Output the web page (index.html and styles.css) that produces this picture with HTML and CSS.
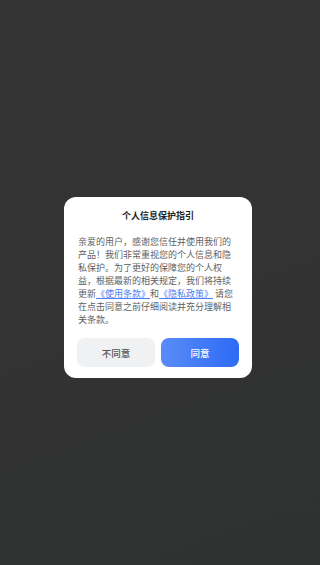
FILE: index.html
```html
<!DOCTYPE html>
<html lang="zh-CN">
<head>
  <meta charset="UTF-8">
  <meta name="viewport" content="width=device-width, initial-scale=1.0">
  <title>个人信息保护指引</title>
  <link rel="stylesheet" href="styles.css">
</head>
<body>
  <!-- Privacy Dialog -->
  <div class="overlay">
    <div class="dialog">
      <h2 class="dialog-title">个人信息保护指引</h2>
      <p class="dialog-text">亲爱的用户，感谢您信任并使用我们的产品！我们非常重视您的个人信息和隐私保护。为了更好的保障您的个人权益，根据最新的相关规定，我们将持续更新<a href="#">《使用条款》</a>和<a href="#">《隐私政策》</a> 请您在点击同意之前仔细阅读并充分理解相关条款。</p>
      <div class="dialog-buttons">
        <button class="btn btn-cancel">不同意</button>
        <button class="btn btn-ok">同意</button>
      </div>
    </div>
  </div>
</body>
</html>
```

FILE: styles.css
```css
/* General Styles */
html, body {
  margin: 0;
  padding: 0;
  height: 100%;
}

body {
  font-family: "Noto Sans CJK SC", "Noto Sans", sans-serif;
  background: linear-gradient(160deg, #353434 0%, #323332 50%, #2f3231 100%);
}

/* Overlay */
.overlay {
  height: 100%;
  display: flex;
  justify-content: center;
  align-items: flex-start;
  padding: 197px 4px 0 0;
  box-sizing: border-box;
}

/* Dialog */
.dialog {
  width: 188px;
  background: #fff;
  border-radius: 12px;
  padding: 11px 13px 11px 13px;
  box-sizing: border-box;
}

.dialog-title {
  margin: 0;
  font-size: 9px;
  font-weight: 600;
  color: #222;
  text-align: center;
  line-height: 16px;
}

.dialog-text {
  margin: 11px 0 0 1px;
  font-size: 9px;
  line-height: 13px;
  color: #5f5f5f;
  text-align: left;
  text-spacing-trim: space-all;
}

.dialog-text a {
  color: #4a80f5;
  text-decoration: underline;
}

/* Buttons */
.dialog-buttons {
  display: flex;
  gap: 6px;
  margin-top: 12px;
}

.btn {
  flex: 1;
  height: 29px;
  border: none;
  border-radius: 8px;
  font-family: inherit;
  font-size: 9.5px;
  font-weight: 500;
  padding: 0;
}

.btn-cancel {
  background: #f0f1f3;
  color: #555;
}

.btn-ok {
  background: linear-gradient(90deg, #5a8cf8 0%, #2d6bf6 100%);
  color: #fff;
}
```
